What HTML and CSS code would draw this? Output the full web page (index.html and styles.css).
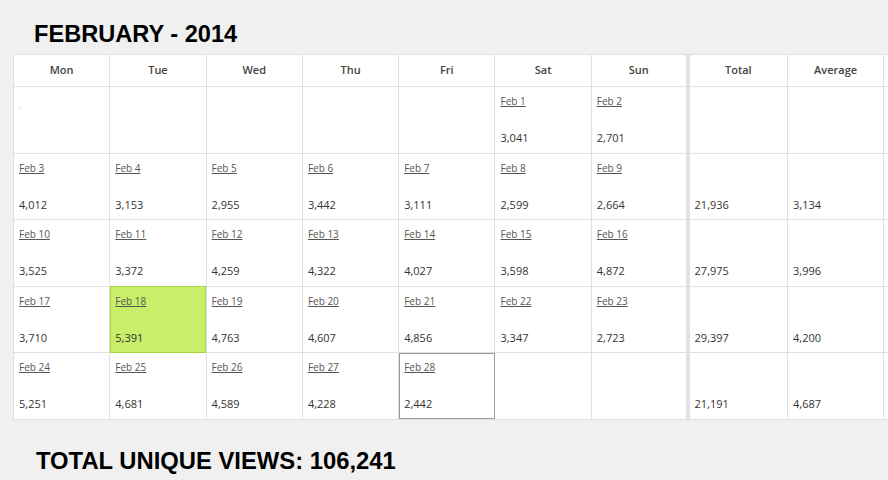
FILE: index.html
```html
<!DOCTYPE html>
<html>
<head>
    <meta charset="utf-8">
    <link rel="stylesheet" href="styles.css">
</head>
<body>
<h1 class="title">FEBRUARY - 2014</h1>
<div class="wrap">
<table class="cal">
    <colgroup>
        <col class="day"><col class="day"><col class="day"><col class="day"><col class="day"><col class="day"><col class="day">
        <col class="sum first"><col class="sum"><col class="sum">
    </colgroup>
    <tr class="head">
        <th>Mon</th><th>Tue</th><th>Wed</th><th>Thu</th><th>Fri</th><th>Sat</th><th>Sun</th>
        <th class="tot">Total</th><th>Average</th><th></th>
    </tr>
    <tr>
        <td><span class="dot"></span></td><td></td><td></td><td></td><td></td>
        <td><a href="#">Feb 1</a><div class="num">3,041</div></td>
        <td><a href="#">Feb 2</a><div class="num">2,701</div></td>
        <td class="tot"></td><td></td><td></td>
    </tr>
    <tr>
        <td><a href="#">Feb 3</a><div class="num">4,012</div></td>
        <td><a href="#">Feb 4</a><div class="num">3,153</div></td>
        <td><a href="#">Feb 5</a><div class="num">2,955</div></td>
        <td><a href="#">Feb 6</a><div class="num">3,442</div></td>
        <td><a href="#">Feb 7</a><div class="num">3,111</div></td>
        <td><a href="#">Feb 8</a><div class="num">2,599</div></td>
        <td><a href="#">Feb 9</a><div class="num">2,664</div></td>
        <td class="tot"><div class="num low">21,936</div></td>
        <td><div class="num low">3,134</div></td><td></td>
    </tr>
    <tr>
        <td><a href="#">Feb 10</a><div class="num">3,525</div></td>
        <td><a href="#">Feb 11</a><div class="num">3,372</div></td>
        <td><a href="#">Feb 12</a><div class="num">4,259</div></td>
        <td><a href="#">Feb 13</a><div class="num">4,322</div></td>
        <td><a href="#">Feb 14</a><div class="num">4,027</div></td>
        <td><a href="#">Feb 15</a><div class="num">3,598</div></td>
        <td><a href="#">Feb 16</a><div class="num">4,872</div></td>
        <td class="tot"><div class="num low">27,975</div></td>
        <td><div class="num low">3,996</div></td><td></td>
    </tr>
    <tr>
        <td><a href="#">Feb 17</a><div class="num">3,710</div></td>
        <td class="best"><a href="#">Feb 18</a><div class="num">5,391</div></td>
        <td><a href="#">Feb 19</a><div class="num">4,763</div></td>
        <td><a href="#">Feb 20</a><div class="num">4,607</div></td>
        <td><a href="#">Feb 21</a><div class="num">4,856</div></td>
        <td><a href="#">Feb 22</a><div class="num">3,347</div></td>
        <td><a href="#">Feb 23</a><div class="num">2,723</div></td>
        <td class="tot"><div class="num low">29,397</div></td>
        <td><div class="num low">4,200</div></td><td></td>
    </tr>
    <tr>
        <td><a href="#">Feb 24</a><div class="num">5,251</div></td>
        <td><a href="#">Feb 25</a><div class="num">4,681</div></td>
        <td><a href="#">Feb 26</a><div class="num">4,589</div></td>
        <td><a href="#">Feb 27</a><div class="num">4,228</div></td>
        <td class="today"><a href="#">Feb 28</a><div class="num">2,442</div></td>
        <td></td><td></td>
        <td class="tot"><div class="num low">21,191</div></td>
        <td><div class="num low">4,687</div></td><td></td>
    </tr>
</table>
</div>
<h2 class="total">TOTAL UNIQUE VIEWS: 106,241</h2>
</body>
</html>
```

FILE: styles.css
```css
body {
    margin: 0;
    background-color: #f0f0f0;
    overflow: hidden;
    font-family: "Open Sans", sans-serif;
}

.title {
    margin: 20px 0 6px 34px;
    font-family: "Liberation Sans", Arial, sans-serif;
    font-size: 23.6px;
    line-height: 28px;
    font-weight: bold;
    color: #000;
}

.wrap {
    padding-left: 13px;
    width: 1000px;
}

.cal {
    table-layout: fixed;
    width: 966px;
    border-collapse: collapse;
    background-color: #fff;
    border-top-left-radius: 4px;
}

.cal col.day {
    width: 96.3px;
}

.cal col.sum {
    width: 96px;
}

.cal col.sum.first {
    width: 100px;
}

.cal th {
    height: 28px;
    padding: 0 0 3px;
    font-size: 11px;
    font-weight: 600;
    color: #444;
    text-align: center;
    border: 1px solid #e0e0e0;
}

.cal td {
    height: 66.6px;
    padding: 7px 5px 0;
    vertical-align: top;
    border: 1px solid #e0e0e0;
    box-sizing: border-box;
}

.cal .tot {
    border-left: 4px solid #e2e2e2;
}

.cal a {
    display: block;
    height: 14px;
    line-height: 14px;
    font-size: 10px;
    color: #555;
    text-decoration: underline;
}

.num {
    margin-top: 23px;
    line-height: 14px;
    font-size: 11px;
    color: #333;
}

.num.low {
    margin-top: 37px;
}

.dot {
    display: block;
    width: 1px;
    height: 1px;
    margin-top: 13px;
    background-color: #aaa;
}

.cal td.best {
    background-color: #c8ee6a;
    outline: 1px solid #a6d63c;
    outline-offset: -1px;
}

.cal td.today {
    outline: 1px solid #9a9a9a;
    outline-offset: -1px;
}

.total {
    margin: 27px 0 0 36px;
    font-family: "Liberation Sans", Arial, sans-serif;
    font-size: 23.8px;
    line-height: 28px;
    font-weight: bold;
    color: #000;
}
```
